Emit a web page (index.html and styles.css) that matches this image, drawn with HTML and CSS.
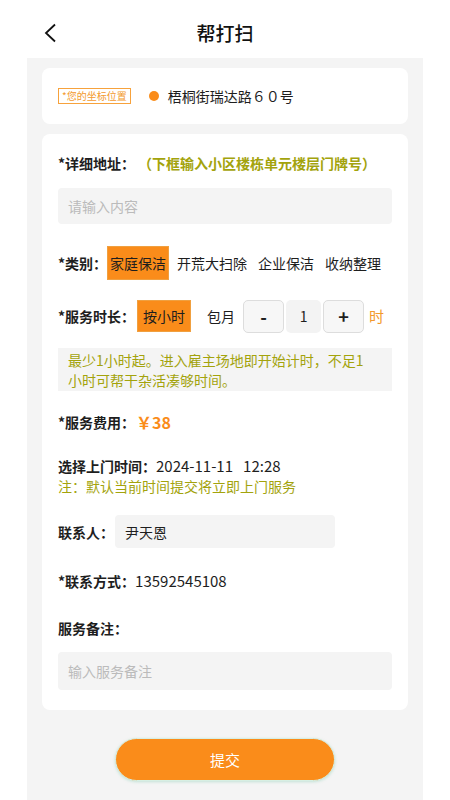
FILE: index.html
```html
<!DOCTYPE html>
<html lang="zh-CN">
<head>
    <meta charset="UTF-8">
    <meta name="viewport" content="width=device-width, initial-scale=1.0">
    <title>帮打扫</title>
    <link rel="stylesheet" href="styles.css">
</head>
<body>
    <div class="top-bar">
        <span class="back">
            <svg width="14" height="20" viewBox="0 0 14 20"><path d="M12 1.5 L3 10 L12 18.5" fill="none" stroke="#111" stroke-width="1.8"/></svg>
        </span>
        <h1>帮打扫</h1>
    </div>

    <div class="page">
        <div class="card loc-card">
            <span class="loc-tag">*您的坐标位置</span>
            <span class="loc-dot"></span>
            <span class="loc-text">梧桐街瑞达路６０号</span>
        </div>

        <div class="card form-card">
            <div class="row">
                <span class="label">*详细地址：</span>
                <span class="hint">（下框输入小区楼栋单元楼层门牌号）</span>
            </div>
            <div class="input-box wide">请输入内容</div>

            <div class="row type-row">
                <span class="label">*类别：</span>
                <span class="opt active">家庭保洁</span>
                <span class="opt">开荒大扫除</span>
                <span class="opt">企业保洁</span>
                <span class="opt">收纳整理</span>
            </div>

            <div class="row time-row">
                <span class="label">*服务时长：</span>
                <span class="opt active big">按小时</span>
                <span class="opt month">包月</span>
                <div class="stepper">
                    <span class="step-btn">-</span>
                    <span class="step-val">1</span>
                    <span class="step-btn">+</span>
                </div>
                <span class="unit">时</span>
            </div>

            <div class="notice">最少1小时起。进入雇主场地即开始计时，不足1小时可帮干杂活凑够时间。</div>

            <div class="row fee-row">
                <span class="label">*服务费用：</span>
                <span class="fee">￥38</span>
            </div>

            <div class="visit">
                <div><span class="label">选择上门时间：</span><span class="num">2024-11-11&nbsp;&nbsp;&nbsp;12:28</span></div>
                <div class="note">注：默认当前时间提交将立即上门服务</div>
            </div>

            <div class="row contact-row">
                <span class="label">联系人：</span>
                <div class="input-box name">尹天恩</div>
            </div>

            <div class="row phone-row">
                <span class="label">*联系方式：</span>
                <span class="num">13592545108</span>
            </div>

            <div class="row remark-row">
                <span class="label">服务备注：</span>
            </div>
            <div class="input-box wide remark">输入服务备注</div>
        </div>

        <div class="actions">
            <button class="submit">提交</button>
        </div>
    </div>
</body>
</html>
```

FILE: styles.css
```css
body {
    margin: 0;
    font-family: "Noto Sans CJK SC", "Noto Sans", sans-serif;
    background-color: #fff;
    color: #1e1e1e;
    font-size: 14px;
    line-height: 20px;
}

.top-bar {
    height: 58px;
    box-sizing: border-box;
    padding-top: 8px;
    display: flex;
    align-items: center;
    justify-content: center;
    position: relative;
}

.top-bar h1 {
    margin: 0;
    font-size: 19px;
    font-weight: 500;
    color: #111;
}

.back {
    position: absolute;
    left: 43px;
    top: 23px;
}

.page {
    width: 396px;
    margin: 0 auto;
    background-color: #f4f4f4;
    padding: 10px 15px 12px;
    box-sizing: border-box;
}

.card {
    background: #fff;
    border-radius: 8px;
}

.loc-card {
    height: 56px;
    display: flex;
    align-items: center;
    padding: 0 16px;
}

.loc-tag {
    border: 1px solid #f7a23c;
    color: #f39a2e;
    font-size: 10px;
    line-height: 14px;
    padding: 0 3px;
}

.loc-dot {
    width: 10px;
    height: 10px;
    border-radius: 50%;
    background: #fa8c1a;
    margin-left: 18px;
}

.loc-text {
    margin-left: 9px;
}

.form-card {
    margin-top: 10px;
    padding: 19px 16px 20px;
}

.row {
    display: flex;
    align-items: center;
    white-space: nowrap;
}

.row > * {
    flex-shrink: 0;
}

.label {
    font-weight: bold;
}

.hint {
    color: #a3a30c;
    font-weight: bold;
    margin-left: 3px;
}

.num {
    font-size: 15px;
}

.input-box {
    background: #f4f4f4;
    border-radius: 4px;
    color: #bbb;
    padding: 0 10px;
    display: flex;
    align-items: center;
}

.input-box.wide {
    height: 36px;
    margin-top: 15px;
}

.type-row {
    margin-top: 22px;
}

.opt {
    height: 34px;
    display: flex;
    align-items: center;
    margin-right: 11px;
}

.opt.active {
    background: #fa8c1a;
    border: 1px solid #f0a040;
    box-sizing: border-box;
    padding: 0 2px;
    margin-right: 8px;
}

.time-row {
    margin-top: 19px;
    height: 34px;
}

.opt.big {
    height: 32px;
    padding: 0 5px;
    margin-left: 2px;
    margin-right: 0;
}

.opt.month {
    margin-left: 16px;
    margin-right: 0;
}

.stepper {
    display: flex;
    gap: 2px;
    margin-left: 8px;
}

.step-btn,
.step-val {
    height: 33px;
    display: flex;
    align-items: center;
    justify-content: center;
    border-radius: 5px;
    box-sizing: border-box;
}

.step-btn {
    width: 41px;
    border: 1px solid #ddd;
    background: #f7f7f7;
    font-size: 18px;
    font-weight: bold;
}

.step-val {
    width: 35px;
    background: #f3f3f3;
}

.unit {
    color: #f39a2e;
    font-size: 15px;
    margin-left: 5px;
}

.notice {
    margin-top: 15px;
    background: #f4f4f4;
    color: #a3a30c;
    line-height: 20px;
    padding: 2px 22px 1px 10px;
}

.fee-row {
    margin-top: 21px;
}

.fee {
    color: #fa8c1a;
    font-weight: bold;
    font-size: 16px;
    margin-left: 1px;
}

.visit {
    margin-top: 24px;
}

.note {
    color: #a3a30c;
}

.contact-row {
    margin-top: 19px;
}

.input-box.name {
    width: 220px;
    height: 33px;
    box-sizing: border-box;
    color: #1e1e1e;
    margin-left: 1px;
}

.phone-row {
    margin-top: 23px;
}

.remark-row {
    margin-top: 27px;
}

.input-box.remark {
    height: 38px;
    margin-top: 14px;
}

.actions {
    display: flex;
    justify-content: center;
    padding: 28px 0 12px;
}

.submit {
    width: 220px;
    height: 43px;
    border: 1px solid #d7efe3;
    border-radius: 22px;
    background: #fa8c1a;
    color: #fff;
    font-family: inherit;
    font-size: 15px;
    box-shadow: 0 1px 3px rgba(120, 200, 170, 0.4);
}
```
